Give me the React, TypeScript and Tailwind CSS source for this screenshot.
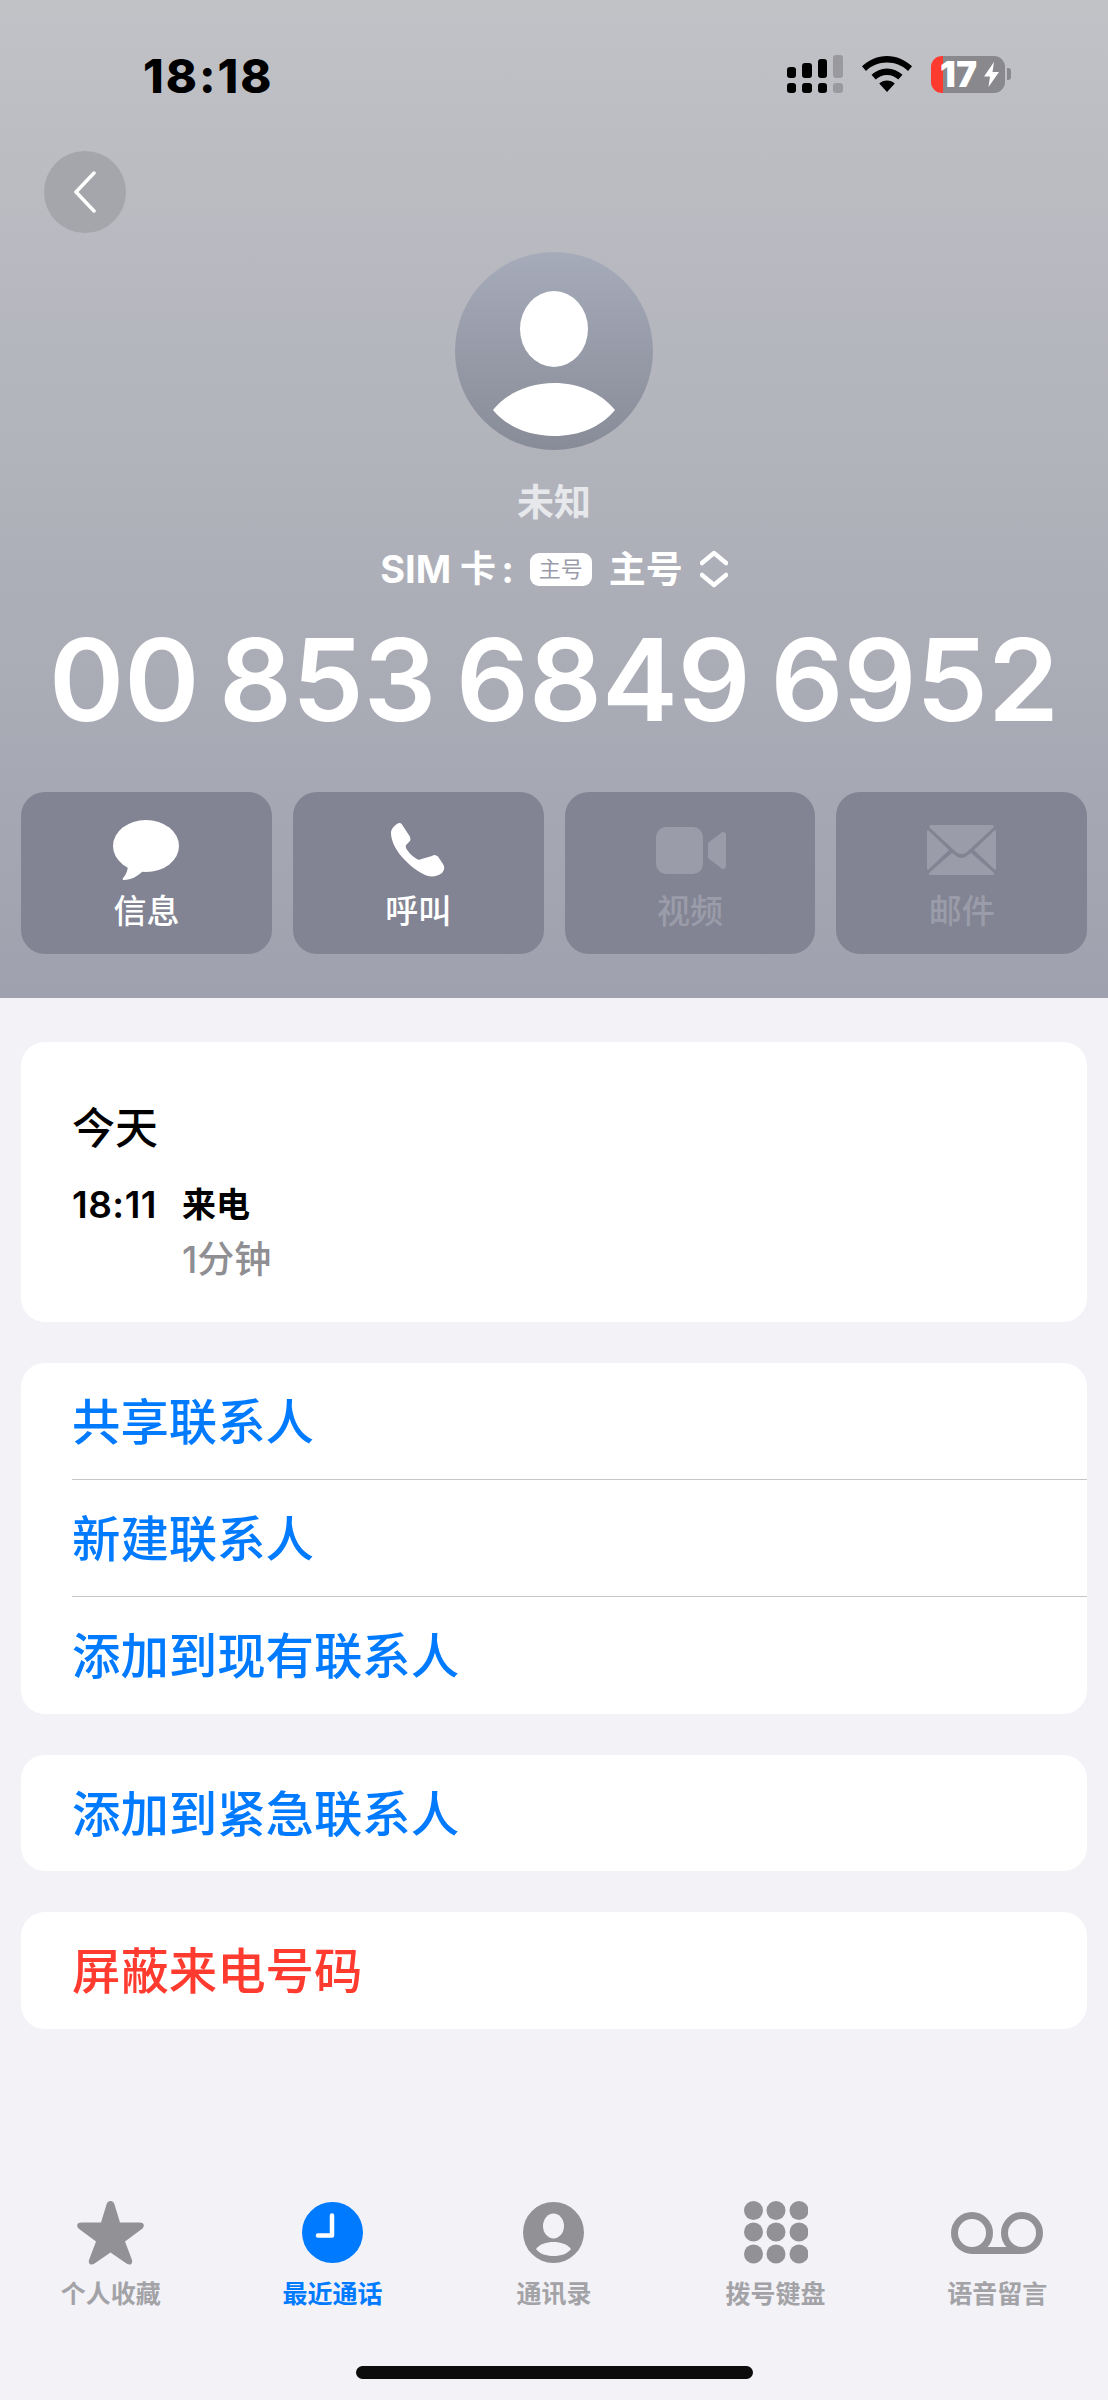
const cjk = "font-['Inter','Noto_Sans_CJK_SC',sans-serif]";

function Signal() {
  return (
    <svg width="56" height="38" viewBox="0 0 56 38" fill="#000">
      <rect x="0" y="12" width="9" height="11" rx="3" />
      <rect x="15" y="8" width="10" height="15" rx="3" />
      <rect x="31" y="4" width="9" height="19" rx="3" />
      <rect x="46" y="0" width="10" height="23" rx="3" fill="#9a9a9e" />
      <rect x="0" y="28" width="9" height="10" rx="3" />
      <rect x="15" y="28" width="10" height="10" rx="3" />
      <rect x="31" y="28" width="9" height="10" rx="3" />
      <rect x="46" y="28" width="10" height="10" rx="3" fill="#9a9a9e" />
    </svg>
  );
}

function Wifi() {
  return (
    <svg width="50" height="36" viewBox="0 0 50 36" fill="#000">
      <path d="M25 0C34.500 0 43 3.700 50 10.300L46 15C40.500 9.700 33.300 6.600 25 6.600C16.700 6.600 9.500 9.700 4 15L0 10.300C7 3.700 15.500 0 25 0Z" />
      <path d="M25 12.500C31 12.500 36.200 14.800 40.500 18.800L36.300 23.500C33.300 20.800 29.500 19 25 19C20.500 19 16.700 20.800 13.700 23.500L9.500 18.800C13.800 14.800 19 12.500 25 12.500Z" />
      <path d="M25 24.500C28 24.500 30.700 25.500 32.800 27.400L25 36L17.200 27.400C19.300 25.500 22 24.500 25 24.500Z" />
    </svg>
  );
}

function Battery() {
  return (
    <div className="flex items-center gap-[2px]">
      <div className="flex h-[37px] w-[74px] items-center justify-start rounded-[11px] bg-[linear-gradient(90deg,#ff3b30_12px,#88888d_12px)] pl-[9px] text-[35px] leading-none font-black tracking-[0.5px] text-white">
        <span>17</span>
        <svg width="15" height="25" viewBox="0 0 15 25" fill="#fff" className="ml-[6px] shrink-0">
          <path d="M10 0L0 14.500H6L4.500 25L15 10H8.500Z" />
        </svg>
      </div>
      <div className="h-[12px] w-[4px] rounded-r-[3px] bg-[#88888d]" />
    </div>
  );
}

function Bubble() {
  return (
    <svg width="66" height="60" viewBox="0 0 66 60" fill="#fff">
      <ellipse cx="33" cy="26" rx="33" ry="26" />
      <path d="M15 45C15 50 13 55 10 58C9 59.500 10 60 11 60C18 60 25 56 30 51Z" />
    </svg>
  );
}

function Phone() {
  return (
    <svg width="54" height="54" viewBox="0 0 54 54" fill="#fff">
      <path d="M6 1C8 -0.500 10 0 11 1.500L18.500 13C20 15.500 19.500 17.500 18 19L15.500 21.500C14.500 22.500 14.500 24 15.500 26C18 30 21 33 25 35.500C27 37 29 37 30.500 36L41 33C43 31.500 45 32 47 33.500L52 41C54 44 53.500 47 51 50C47 53 42 54 37 53C28 50 19 43 11 34C4 26 0 17 0 10C0 6 3 3 6 1Z" />
    </svg>
  );
}

function Video() {
  return (
    <svg width="70" height="47" viewBox="0 0 70 47" fill="#9a9ca9" className="ml-[3px]">
      <rect x="0" y="0" width="47" height="47" rx="10" />
      <path d="M52 16L65 6C67 4 70 5 70 8V39C70 42 67 43 65 41L52 31Z" />
    </svg>
  );
}

function Mail() {
  return (
    <svg width="69" height="50" viewBox="0 0 69 50" fill="#9a9ca9">
      <path d="M4 0H65C67 0 67 2 66 3L41 26C37 30 32 30 28 26L3 3C2 2 2 0 4 0Z" />
      <path d="M0 7C0 5 1 5 2 6L22 25L2 44C1 45 0 45 0 43Z" />
      <path d="M69 7C69 5 68 5 67 6L47 25L67 44C68 45 69 45 69 43Z" />
      <path d="M25 28L28 30C32 34 37 34 41 30L44 28L66 47C68 49 67 50 65 50H4C2 50 1 49 3 47Z" />
    </svg>
  );
}

function ActionButton({ label, icon, dim }: { label: string; icon: React.ReactNode; dim?: boolean }) {
  return (
    <div className="flex h-[162px] flex-col items-center rounded-[24px] bg-[#828493]">
      <div className="mt-[28px] flex h-[60px] items-center justify-center">{icon}</div>
      <div className={`mt-[9px] text-[33px] leading-[44px] font-medium ${dim ? "text-[#9a9ca9]" : "text-white"}`}>{label}</div>
    </div>
  );
}

function TabStar() {
  return (
    <svg width="67" height="64" viewBox="0 0 67 64" fill="#929296">
      <path d="M33.500 0C35.500 0 37 1.500 37.500 3.500L43 21.500H62.500C67 21.500 68 24.500 65.500 27.500L48 40.500L55 59C56 63 53 65 49.500 62.500L33.500 51.500L17.500 62.500C14 65 11 63 12 59L19 40.500L1.500 27.500C-1 24.500 0 21.500 4.500 21.500H24L29.500 3.500C30 1.500 31.500 0 33.500 0Z" />
    </svg>
  );
}

function TabClock() {
  return (
    <svg width="61" height="61" viewBox="0 0 61 61">
      <circle cx="30.500" cy="30.500" r="30.500" fill="#007aff" />
      <path d="M30 13.500V33.500H16" fill="none" stroke="#fff" strokeWidth="4.500" strokeLinecap="round" strokeLinejoin="round" />
    </svg>
  );
}

function TabContact() {
  return (
    <svg width="61" height="61" viewBox="0 0 61 61">
      <circle cx="30.500" cy="30.500" r="30.500" fill="#929296" />
      <ellipse cx="30.500" cy="24" rx="10.500" ry="12.500" fill="#f2f2f7" />
      <path d="M13 47C17 42 23 40 30.500 40C38 40 44 42 48 47C44 52 38 54 30.500 54C23 54 17 52 13 47Z" fill="#f2f2f7" />
    </svg>
  );
}

function TabKeypad() {
  const xs = [9.500, 32, 55];
  const ys = [9.500, 31, 53];
  return (
    <svg width="64" height="63" viewBox="0 0 64 63" fill="#929296">
      {ys.map((y) => xs.map((x) => <circle key={`${x}-${y}`} cx={x} cy={y} r="9.500" />))}
    </svg>
  );
}

function TabVoicemail() {
  return (
    <svg width="92" height="42" viewBox="0 0 92 42" fill="none" stroke="#929296" strokeWidth="7">
      <circle cx="21" cy="21" r="17.500" />
      <circle cx="71" cy="21" r="17.500" />
      <path d="M21 38.500H71" />
    </svg>
  );
}

function Tab({ label, icon, active }: { label: string; icon: React.ReactNode; active?: boolean }) {
  return (
    <div className="flex flex-col items-center">
      <div className="flex h-[65px] items-center justify-center">{icon}</div>
      <div className={`mt-[13px] text-[25px] leading-[32px] font-semibold ${active ? "text-[#007aff]" : "text-[#a3a3a7]"}`}>{label}</div>
    </div>
  );
}

function Row({ label, color, border }: { label: string; color?: string; border?: boolean }) {
  return (
    <div className="pl-[51px]">
      <div className={`flex h-[117px] items-center pt-[4px] text-[48.4px] leading-none font-medium ${color ?? "text-[#007aff]"} ${border ? "border-b border-[#c6c6c8]" : ""}`}>
        {label}
      </div>
    </div>
  );
}

export default function App() {
  return (
    <div className={`min-h-[2400px] w-[1108px] overflow-hidden bg-[#f2f2f7] ${cjk}`}>
      <header className="h-[998px] bg-gradient-to-b from-[#c1c2c6] to-[#9fa1ae] px-[21px] pt-[52px]">
        {/* status bar */}
        <div className="flex h-[44px] items-center pl-[122px]">
          <div className="mt-[2px] text-[47px] leading-none font-extrabold tracking-[2px] text-black">18:18</div>
          <div className="mr-[76px] ml-auto flex items-center gap-[19px]">
            <Signal />
            <Wifi />
            <Battery />
          </div>
        </div>

        <div className="mt-[55px] ml-[23px] flex h-[82px] w-[82px] items-center justify-center rounded-full bg-[#a5a6ab]">
          <svg width="24" height="42" viewBox="0 0 24 42" fill="none" stroke="#fff" strokeWidth="3.500" strokeLinecap="round" strokeLinejoin="round">
            <path d="M21 2L3 21L21 40" />
          </svg>
        </div>

        <div className="flex flex-col items-center">
          <div className="mt-[19px] h-[198px] w-[198px] rounded-full bg-gradient-to-b from-[#a6abba] to-[#888c98]">
            <svg width="198" height="198" viewBox="0 0 198 198" fill="#fff">
              <ellipse cx="99" cy="77" rx="34" ry="38" />
              <path d="M38 158C52 141 74 131 99 131C124 131 146 141 160 158C146 175 124 184 99 184C74 184 52 175 38 158Z" />
            </svg>
          </div>
          <div className="mt-[27px] flex h-[50px] items-center text-[37px] leading-none font-semibold text-[#e7e8eb]">未知</div>
          <div className="mt-[20px] flex h-[44px] items-center text-[38px] leading-none font-bold text-white">
            <span>SIM</span>
            <span className="ml-[9px] text-[36px] font-semibold">卡</span>
            <span className="ml-[5px]">:</span>
            <span className="ml-[16px] flex h-[33px] w-[62px] items-center justify-center rounded-[9px] bg-white text-[22px] font-normal text-[#9a9ca9]">主号</span>
            <span className="ml-[17px] text-[37px] font-semibold">主号</span>
            <svg width="28" height="38" viewBox="0 0 28 38" fill="none" stroke="#fff" strokeWidth="4.500" strokeLinecap="round" strokeLinejoin="round" className="ml-[17px]">
              <path d="M2 13L14 3L26 13M2 25L14 35L26 25" />
            </svg>
          </div>
          <div className="mt-[29px] flex h-[120px] items-center text-[114px] leading-none font-semibold whitespace-nowrap text-white [word-spacing:-9px]">
            00 853 6849 6952
          </div>
        </div>

        <div className="mt-[52px] grid grid-cols-4 gap-[21px]">
          <ActionButton label="信息" icon={<Bubble />} />
          <ActionButton label="呼叫" icon={<Phone />} />
          <ActionButton label="视频" icon={<Video />} dim />
          <ActionButton label="邮件" icon={<Mail />} dim />
        </div>
      </header>

      <main className="flex flex-col gap-[41px] px-[21px] pt-[44px]">
        <section className="h-[280px] rounded-[24px] bg-white pt-[61px] pl-[51px]">
          <div className="text-[43px] leading-[50px] font-medium text-black">今天</div>
          <div className="mt-[29px] flex">
            <div className="w-[110px] text-[37px] leading-[46px] font-semibold tracking-[0.5px] text-black">18:11</div>
            <div>
              <div className="text-[34px] leading-[46px] font-bold text-black">来电</div>
              <div className="mt-[9px] text-[37px] leading-[46px] font-medium text-[#8e8e93]">1分钟</div>
            </div>
          </div>
        </section>

        <section className="rounded-[24px] bg-white">
          <Row label="共享联系人" border />
          <Row label="新建联系人" border />
          <Row label="添加到现有联系人" />
        </section>

        <section className="h-[116px] rounded-[24px] bg-white">
          <Row label="添加到紧急联系人" />
        </section>

        <section className="rounded-[24px] bg-white">
          <Row label="屏蔽来电号码" color="text-[#ff3b30]" />
        </section>
      </main>

      <nav className="mt-[171px] grid grid-cols-5">
        <Tab label="个人收藏" icon={<TabStar />} />
        <Tab label="最近通话" icon={<TabClock />} active />
        <Tab label="通讯录" icon={<TabContact />} />
        <Tab label="拨号键盘" icon={<TabKeypad />} />
        <Tab label="语音留言" icon={<TabVoicemail />} />
      </nav>

      <div className="mx-auto mt-[56px] h-[13px] w-[397px] rounded-full bg-[#0c0c0c]" />
    </div>
  );
}
